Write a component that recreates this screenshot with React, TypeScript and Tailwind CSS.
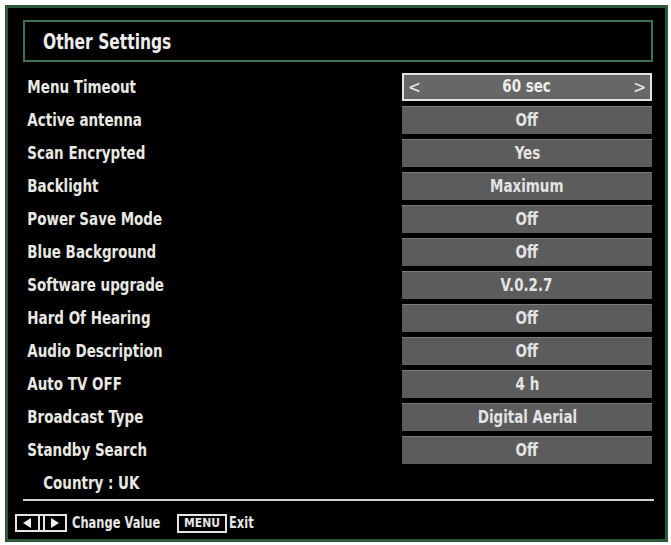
import React from 'react'

const rows: { label: string; value: string }[] = [
  { label: 'Menu Timeout', value: '60 sec' },
  { label: 'Active antenna', value: 'Off' },
  { label: 'Scan Encrypted', value: 'Yes' },
  { label: 'Backlight', value: 'Maximum' },
  { label: 'Power Save Mode', value: 'Off' },
  { label: 'Blue Background', value: 'Off' },
  { label: 'Software upgrade', value: 'V.0.2.7' },
  { label: 'Hard Of Hearing', value: 'Off' },
  { label: 'Audio Description', value: 'Off' },
  { label: 'Auto TV OFF', value: '4 h' },
  { label: 'Broadcast Type', value: 'Digital Aerial' },
  { label: 'Standby Search', value: 'Off' },
]

const tvFont = {
  fontFamily: '"DejaVu Sans Condensed", "DejaVu Sans", sans-serif',
}

function ArrowKeys() {
  return (
    <div className="flex h-[18px] w-[52px] items-stretch border-2 border-[#e6e6e6] bg-black">
      <div className="flex flex-1 items-center justify-center">
        <svg width="12" height="12" viewBox="0 0 12 12">
          <path d="M10 1 L2 6 L10 11 Z" fill="#eeeeee" />
        </svg>
      </div>
      <div className="w-[2px] bg-[#e6e6e6]" />
      <div className="w-[3px]" />
      <div className="w-[2px] bg-[#e6e6e6]" />
      <div className="flex flex-1 items-center justify-center">
        <svg width="12" height="12" viewBox="0 0 12 12">
          <path d="M2 1 L10 6 L2 11 Z" fill="#eeeeee" />
        </svg>
      </div>
    </div>
  )
}

export default function App() {
  return (
    <div className="min-h-[545px] w-[671px] bg-white pl-[5px] pt-[5px]" style={tvFont}>
      <div className="flex h-[537px] w-[663px] flex-col border-[3px] border-[#2c5839] bg-black">
        {/* Title */}
        <div className="ml-[15px] mt-[12px] flex h-[42px] w-[630px] items-center border-2 border-[#436f52] pl-[18px] pt-[4px]">
          <span className="inline-block origin-left scale-x-[0.82] whitespace-nowrap text-[21px] font-bold text-[#ececec]">
            Other Settings
          </span>
        </div>

        {/* Settings list */}
        <div className="mt-[11px] flex flex-col">
          {rows.map((row, i) => (
            <div key={row.label} className="mb-[5px] flex h-[28px] items-center justify-between pr-[13px]">
              <span className="inline-block origin-left scale-x-[0.88] whitespace-nowrap pl-[22px] pt-[2px] text-[17px] font-bold text-[#e9e9e3]">
                {row.label}
              </span>
              {i === 0 ? (
                <div className="flex h-[28px] w-[250px] items-center justify-between border-2 border-[#e2e2e2] bg-[#676767] px-[4px] text-[#ededed]">
                  <span className="text-[17px] leading-none">&lt;</span>
                  <span className="inline-block scale-x-[0.88] whitespace-nowrap text-[17px] font-bold">{row.value}</span>
                  <span className="text-[17px] leading-none">&gt;</span>
                </div>
              ) : (
                <div className="flex h-[28px] w-[250px] items-center justify-center border-t border-[#7a7a7a] bg-[#5c5c5c] text-[#e4e4e4]">
                  <span className="inline-block scale-x-[0.88] whitespace-nowrap text-[17px] font-bold">{row.value}</span>
                </div>
              )}
            </div>
          ))}
          <div className="flex h-[28px] items-center">
            <span className="inline-block origin-left scale-x-[0.88] whitespace-nowrap pl-[40px] pt-[2px] text-[17px] font-bold text-[#e9e9e3]">
              Country : UK
            </span>
          </div>
        </div>

        {/* Separator */}
        <div className="ml-[15px] mt-[2px] h-[2px] w-[631px] bg-[#cfcfcf]" />

        {/* Footer */}
        <div className="ml-[7px] mt-[10px] flex items-center font-bold text-[#e6e6e6]">
          <ArrowKeys />
          <span className="ml-[5px] w-[101px] whitespace-nowrap">
            <span className="inline-block origin-left scale-x-[0.85] text-[15px]">Change Value</span>
          </span>
          <div className="ml-[4px] flex h-[19px] w-[50px] items-center justify-center border-2 border-[#e6e6e6] bg-black text-[12px] leading-none">
            MENU
          </div>
          <span className="ml-[2px] inline-block origin-left scale-x-[0.85] text-[15px]">Exit</span>
        </div>
      </div>
    </div>
  )
}
